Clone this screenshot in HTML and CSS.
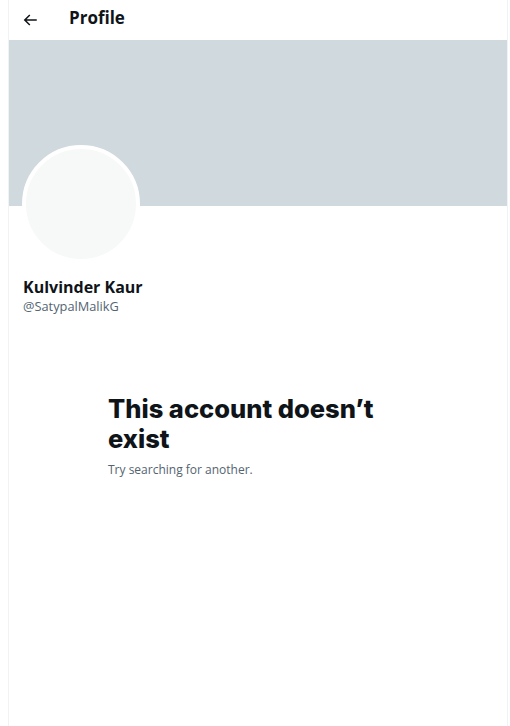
FILE: index.html
```html
<!DOCTYPE html>
<html lang="en">
<head>
<meta charset="utf-8">
<title>Profile</title>
<link rel="stylesheet" href="styles.css">
</head>
<body>
<main class="column">
  <header class="topbar">
    <svg class="back" viewBox="0 0 24 24" aria-hidden="true"><path d="M7.414 13l5.043 5.04-1.414 1.42L3.586 12l7.457-7.46 1.414 1.42L7.414 11H21v2H7.414z"/></svg>
    <h1 class="title">Profile</h1>
  </header>
  <div class="banner"></div>
  <section class="info">
    <div class="avatar"></div>
    <div class="name">Kulvinder Kaur</div>
    <div class="handle">@SatypalMalikG</div>
  </section>
  <section class="empty">
    <h2 class="empty-title">This account doesn’t exist</h2>
    <p class="empty-sub">Try searching for another.</p>
  </section>
</main>
</body>
</html>
```
FILE: styles.css
```css
html, body {
  margin: 0;
  padding: 0;
  background: #ffffff;
}
body {
  font-family: "Noto Sans", "Open Sans", sans-serif;
  color: #0f1419;
}
.column {
  margin-left: 8px;
  width: 498px;
  min-height: 726px;
  border-left: 1px solid #eff3f4;
  border-right: 1px solid #eff3f4;
  display: flex;
  flex-direction: column;
}
.topbar {
  height: 40px;
  display: flex;
  align-items: center;
  padding-left: 12px;
  box-sizing: border-box;
}
.back {
  width: 18px;
  height: 18px;
  fill: #0f1419;
}
.title {
  margin: 0 0 6px 30px;
  font-family: "Open Sans", sans-serif;
  font-weight: 700;
  font-size: 17px;
  letter-spacing: 0;
}
.banner {
  height: 166px;
  background: #cfd9de;
}
.info {
  padding: 0 14px;
  display: flex;
  flex-direction: column;
}
.avatar {
  width: 110px;
  height: 110px;
  margin-top: -61px;
  margin-left: -1px;
  border-radius: 50%;
  background: #f7f9f9;
  border: 4px solid #ffffff;
}
.name {
  margin-top: 13px;
  font-family: "Open Sans", sans-serif;
  font-weight: 700;
  font-size: 16px;
  line-height: 22px;
}
.handle {
  font-family: "Open Sans", sans-serif;
  font-size: 12.8px;
  line-height: 17px;
  color: #536471;
}
.empty {
  width: 300px;
  margin: 79px auto 0;
}
.empty-title {
  margin: 0;
  font-family: Inter, sans-serif;
  font-weight: 800;
  font-size: 25.5px;
  line-height: 30px;
}
.empty-sub {
  margin: 7px 0 0;
  font-family: "Open Sans", sans-serif;
  font-size: 12px;
  line-height: 17px;
  color: #536471;
}
```
